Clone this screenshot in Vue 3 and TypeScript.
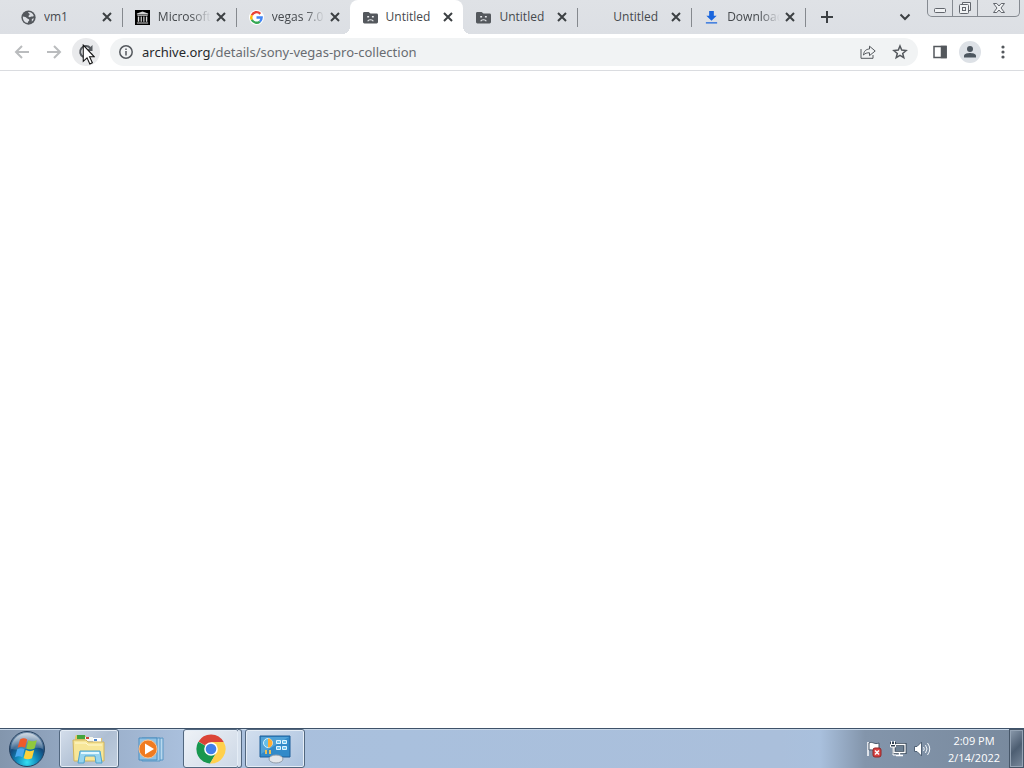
<script setup lang="ts">
import { ref } from 'vue'

type IconName = 'globe' | 'archive' | 'google' | 'sad' | 'none' | 'download'

interface Tab {
  id: number
  title: string
  icon: IconName
}

const tabs: Tab[] = [
  { id: 1, title: 'vm1', icon: 'globe' },
  { id: 2, title: 'Microsoft', icon: 'archive' },
  { id: 3, title: 'vegas 7.0', icon: 'google' },
  { id: 4, title: 'Untitled', icon: 'sad' },
  { id: 5, title: 'Untitled', icon: 'sad' },
  { id: 6, title: 'Untitled', icon: 'none' },
  { id: 7, title: 'Downloads', icon: 'download' },
]
const active = ref(4)

function hasDivider(index: number): boolean {
  return tabs[index].id !== active.value && tabs[index + 1]?.id !== active.value
}
</script>

<template>
  <div class="desktop">
    <header class="strip">
      <div class="tabs" role="tablist">
        <div
          v-for="(tab, i) in tabs"
          :key="tab.id"
          class="tab"
          :class="{ active: tab.id === active, divided: hasDivider(i) }"
        >
          <button class="pick" role="tab" :aria-selected="tab.id === active" @click="active = tab.id">
            <svg class="favicon" viewBox="0 0 16 16" aria-hidden="true">
              <g v-if="tab.icon === 'globe'">
                <circle cx="8" cy="8" r="7.6" fill="#54585d" />
                <path d="M2 6.8c2.2.4 3 .2 4 1.6 1 1.2 2.600.6 2.800 2.200.2 1.200-1.600 1-1.600 3.300C4.200 13.600 2 11 2 8z" fill="#dee1e6" />
                <path d="M7.600 2.200c2.600-.3 5.200 1.300 6 3.800-.8 1.500-2.200.3-3.200 1.300-1.200.8-2.600.2-2.400-.9.200-1 1.400-.9 1.200-2-.2-.9-1.600-.7-1.600-2.200z" fill="#dee1e6" />
                <path d="M11.500 9.500l2.200-.6c-.3 1.600-1 2.600-2.200 3.500z" fill="#dee1e6" />
              </g>
              <g v-else-if="tab.icon === 'archive'">
                <path d="M0 0h16v16H0z" fill="#000" />
                <path d="M8 1.500l6 2.300v1H2v-1zM2.500 5.500h11v1h-11zM3 7h1.500v5.500H3zM6 7h1.300v5.500H6zM8.800 7h1.300v5.500H8.800zM11.600 7h1.500v5.500h-1.500zM2 13.200h12v1.300H2z" fill="#d5d5d5" />
              </g>
              <g v-else-if="tab.icon === 'google'">
                <circle cx="8" cy="8" r="8" fill="#fff" />
                <g fill="none" stroke-width="2.500">
                  <path d="M12.100 4.100A5.600 5.600 0 0 0 3 5.500" stroke="#ea4335" />
                  <path d="M3 5.500a5.600 5.600 0 0 0 0 5" stroke="#fbbc05" />
                  <path d="M3 10.500a5.600 5.600 0 0 0 8.600 1.800" stroke="#34a853" />
                  <path d="M11.600 12.300A5.600 5.600 0 0 0 13.500 8H8" stroke="#4285f4" />
                </g>
              </g>
              <g v-else-if="tab.icon === 'sad'">
                <path d="M0 3.500Q0 2 1.500 2H6l2 1.800h6.500Q16 3.800 16 5.200v7.600q0 1.500-1.500 1.500h-13Q0 14.300 0 12.800z" fill="#54585d" />
                <path d="M4.500 6.500h2v1.600h-2zM9.500 6.500h2v1.600h-2z" fill="#e8eaed" />
                <path d="M5 12c.8-2.200 5.200-2.200 6 0" fill="none" stroke="#e8eaed" stroke-width="1.200" />
              </g>
              <g v-else-if="tab.icon === 'download'" fill="#1a66dd">
                <path d="M5.500 1h5v5H13.500L8 11.500 2.500 6h3zM2 13h12v1.500H2z" />
              </g>
            </svg>
            <span class="title" :class="{ long: tab.title.length > 8 }">{{ tab.title }}</span>
          </button>
          <button class="close" aria-label="Close tab">
            <svg viewBox="0 0 10 10" aria-hidden="true"><path d="M1 1l8 8M9 1L1 9" /></svg>
          </button>
        </div>
      </div>
      <button class="plus" aria-label="New tab">
        <svg viewBox="0 0 14 14" aria-hidden="true"><path d="M7 1v12M1 7h12" /></svg>
      </button>
      <button class="chevron" aria-label="Search tabs">
        <svg viewBox="0 0 12 8" aria-hidden="true"><path d="M1.500 1.500L6 6l4.500-4.500" /></svg>
      </button>
      <div class="window-controls">
        <button class="min" aria-label="Minimize">
          <svg width="14" height="16" viewBox="0 0 14 16"><rect x="1.500" y="8.500" width="11" height="4" rx="1" /></svg>
        </button>
        <button class="max" aria-label="Restore">
          <svg width="14" height="16" viewBox="0 0 14 16">
            <path d="M4.500 4V2.500h8v8H11" /><rect x="1.500" y="4.500" width="9" height="9" rx="1" /><rect x="4.500" y="7.500" width="3" height="3" />
          </svg>
        </button>
        <button class="shut" aria-label="Close window">
          <svg width="14" height="16" viewBox="0 0 14 16"><path d="M1.500 3.500h3.300L7 6l2.200-2.500h3.300L9 8l3.500 4.500H9.200L7 10l-2.200 2.500H1.500L5 8z" /></svg>
        </button>
      </div>
    </header>

    <nav class="toolbar">
      <button class="tool faded" aria-label="Back">
        <svg viewBox="0 0 16 16" aria-hidden="true"><path d="M15 8H2M8 2L2 8l6 6" /></svg>
      </button>
      <button class="tool faded" aria-label="Forward">
        <svg viewBox="0 0 16 16" aria-hidden="true"><path d="M1 8h13M8 2l6 6-6 6" /></svg>
      </button>
      <button class="tool reload" aria-label="Reload">
        <svg viewBox="0 0 16 16" aria-hidden="true">
          <path d="M13.500 9.500A5.800 5.800 0 1 1 12.300 4" /><path d="M14.500 1v6h-6z" fill="#54585d" stroke="none" />
        </svg>
        <svg class="cursor" viewBox="0 0 12 20" aria-hidden="true">
          <path d="M1 1v15.500l3.600-3.300 2.700 5.800 2.400-1.100L7 12.200h4.500z" />
        </svg>
      </button>
      <div class="address">
        <button class="mini" aria-label="Site information">
          <svg width="14" height="14" viewBox="0 0 14 14">
            <circle cx="7" cy="7" r="6.200" /><path d="M7 6v4.500M7 3.400V5" />
          </svg>
        </button>
        <div class="url" role="textbox" aria-label="Address" tabindex="0">archive.org<span>/details/sony-vegas-pro-collection</span></div>
        <button class="mini share" aria-label="Share">
          <svg width="16" height="16" viewBox="0 0 16 16">
            <path d="M1 5v9.300h12V11" /><path d="M3.500 11c.4-4 2.500-5.800 6-6V2.200L15.200 7l-5.700 4.600V8.800c-2.500-.1-4.300.4-6 2.200z" />
          </svg>
        </button>
        <button class="mini" aria-label="Bookmark this tab">
          <svg width="16" height="16" viewBox="0 0 16 16"><path d="M8 2l1.700 4.100 4.400.4-3.400 2.900 1.100 4.300L8 11.400l-3.800 2.300 1.100-4.300-3.400-2.900 4.400-.4z" /></svg>
        </button>
      </div>
      <div class="extras">
        <button class="mini" aria-label="Side panel">
          <svg width="16" height="16" viewBox="0 0 16 16"><path d="M2 2.500h12v11H2z" /><path d="M9.500 2.500H14v11H9.500z" fill="#54585d" /></svg>
        </button>
        <button class="profile" aria-label="Profile">
          <svg width="14" height="14" viewBox="0 0 14 14"><circle cx="7" cy="4" r="3" /><path d="M1 12.500v-1.700C1 8.600 5 8 7 8s6 .6 6 2.800v1.700z" /></svg>
        </button>
        <button class="mini menu" aria-label="Menu">
          <svg width="4" height="14" viewBox="0 0 4 14"><circle cx="2" cy="2" r="1.600" /><circle cx="2" cy="7" r="1.600" /><circle cx="2" cy="12" r="1.600" /></svg>
        </button>
      </div>
    </nav>

    <main class="page"></main>

    <footer class="taskbar">
      <button class="start" aria-label="Start">
        <svg width="38" height="38" viewBox="0 0 38 38">
          <defs>
            <radialGradient id="orb" cx="50%" cy="88%" r="85%">
              <stop offset="0" stop-color="#35e0f2" /><stop offset=".35" stop-color="#128abb" />
              <stop offset=".65" stop-color="#14497b" /><stop offset="1" stop-color="#7d97b2" />
            </radialGradient>
            <linearGradient id="gloss" x1="0" y1="0" x2="0" y2="1">
              <stop offset="0" stop-color="#fff" stop-opacity=".65" /><stop offset="1" stop-color="#fff" stop-opacity=".15" />
            </linearGradient>
          </defs>
          <circle cx="19" cy="19" r="17.500" fill="url(#orb)" stroke="#26415f" />
          <path d="M3 19a16 16 0 0 1 32 0c-8-4-23 3-32 0z" fill="url(#gloss)" />
          <path d="M12 9.500c2.800-1.600 5-1.400 7.200 0l-2.200 8.300c-2.200-1.400-4.700-1.400-7.400 0z" fill="#ef5a2a" />
          <path d="M20.400 10.200c2.800 1.600 5 1.500 8.400 0l-2.200 8.200c-3 1.500-5.500 1.400-8.400 0z" fill="#90c83e" />
          <path d="M9.200 19.200c2.600-1.400 5-1.400 7.400 0l-2.200 8.100c-2.400-1.400-4.800-1.400-7.400 0z" fill="#4aa9ef" />
          <path d="M17.800 20c2.800 1.500 5.400 1.500 8.400 0L24 28.200c-3 1.400-5.600 1.400-8.400 0z" fill="#fdd13a" />
        </svg>
      </button>
      <button class="task open" aria-label="Windows Explorer">
        <svg width="36" height="34" viewBox="0 0 36 34">
          <path d="M4 5l1-2h9l2 3h15v3H4z" fill="#e5c86c" />
          <path d="M6 3h8v4H6z" fill="#44a43d" /><path d="M14 5h8v4h-8z" fill="#f6f8ef" /><path d="M15 5h3v2h-3z" fill="#cf4636" /><path d="M22 6h8v4h-8z" fill="#fff" /><path d="M23 7h3v2h-3z" fill="#4e88d2" />
          <path d="M2 8h13l2 2h16v19H3z" fill="#f7e698" stroke="#d0b45c" />
          <path d="M4 11h11l2 2h14" fill="none" stroke="#fff9d0" />
          <path d="M7 31l2-12h20l2 12h-6l-1-7H14l-1 7z" fill="#96d4ef" stroke="#4ca3ce" />
          <path d="M10 21h18" stroke="#e1f8ff" stroke-width="2" />
        </svg>
      </button>
      <button class="task" aria-label="Windows Media Player">
        <svg width="32" height="28" viewBox="0 0 32 28">
          <path d="M10 4l18-1v22H10z" fill="#b9d8ee" stroke="#5796c5" />
          <path d="M7 3h18v23H7z" fill="#a9cfea" stroke="#5796c5" />
          <path d="M4 3h18v22H4z" fill="#90c2e4" stroke="#4a8dbf" />
          <circle cx="13" cy="14" r="9" fill="#f07b20" stroke="#fbc18c" /><path d="M10 8.500l9 5.500-9 5.500z" fill="#fff" />
        </svg>
      </button>
      <button class="task open chrome" aria-label="Google Chrome">
        <svg width="30" height="30" viewBox="0 0 30 30">
          <path d="M15 15L2.500 7.500A14.500 14.500 0 0 1 27.700 8z" fill="#db4437" />
          <path d="M2.300 7.800A14.500 14.500 0 0 0 14 29.500l6.500-11L15 15z" fill="#18974f" />
          <path d="M27.700 8A14.500 14.500 0 0 1 14 29.500l7-12L15 8z" fill="#ffd04c" />
          <circle cx="15" cy="15" r="6.800" fill="#fff" /><circle cx="15" cy="15" r="5.300" fill="#427fea" />
        </svg>
      </button>
      <button class="task open panel" aria-label="Control Panel">
        <svg width="34" height="30" viewBox="0 0 34 30">
          <path d="M2 2h30v21H2z" fill="#328ac9" stroke="#1f5f99" /><path d="M3 3h28L3 20z" fill="#64b1df" opacity=".6" />
          <circle cx="10" cy="9" r="4.500" fill="#65bfe9" stroke="#d5f1ff" /><path d="M10 9V4.500A4.500 4.500 0 0 1 10 13.500z" fill="#ffad32" />
          <g fill="#6fc3ec" stroke="#dff4ff"><path d="M18.500 6.500h4v3h-4zM24.500 6.500h4v3h-4zM18.500 12.500h4v3h-4zM24.500 12.500h4v3h-4z" /></g>
          <path d="M8 16v4M12 16v4" stroke="#edbf54" stroke-width="2" />
          <ellipse cx="18" cy="25" rx="7" ry="4" fill="#e3e6ea" stroke="#929daa" />
        </svg>
      </button>
      <div class="tray">
        <button aria-label="Action Center">
          <svg width="18" height="18" viewBox="0 0 18 18">
            <path d="M3 2v14" stroke="#fff" stroke-width="1.500" /><path d="M4 3c4-2 5 2 10 0v7c-5 2-6-1-10 0z" fill="#fff" stroke="#49586a" />
            <rect x="8" y="8" width="8" height="9" rx="2" fill="#d94343" stroke="#912626" /><path d="M10 10.500l4 4M14 10.500l-4 4" stroke="#fff" stroke-width="1.500" />
          </svg>
        </button>
        <button aria-label="Network">
          <svg width="18" height="18" viewBox="0 0 18 18">
            <path d="M5 4.500h11v8H5z" fill="#6c7f92" stroke="#2f3f50" stroke-width="3" /><path d="M5 4.500h11v8H5zM10.500 13v2M7 15.500h7" fill="none" stroke="#fff" stroke-width="1.300" />
            <path d="M1 2h6v5H1z" fill="#2f3f50" /><path d="M2.500 1v3M5.500 1v3M1.500 4.500h5V7h-5zM4 7v8h3" fill="none" stroke="#fff" />
          </svg>
        </button>
        <button aria-label="Volume">
          <svg width="18" height="18" viewBox="0 0 18 18">
            <path d="M1.500 6.500H4L8.500 2v14L4 11.500H1.500z" fill="#fff" stroke="#506175" />
            <path d="M10.500 7q1.500 2 0 4M12.500 5q3 4 0 8M14.500 3q4.500 6 0 12" fill="none" stroke="#f2f6fa" />
          </svg>
        </button>
      </div>
      <button class="clock"><span>2:09 PM</span><span>2/14/2022</span></button>
      <button class="show" aria-label="Show desktop"></button>
    </footer>
  </div>
</template>

<style>
body {
  margin: 0;
}
</style>

<style scoped>
.desktop {
  display: flex;
  flex-direction: column;
  min-height: 100vh;
  background: #fff;
  font-family: "Open Sans", "Noto Sans", sans-serif;
  font-size: 12px;
  color: #45494d;
}
button {
  display: flex;
  align-items: center;
  justify-content: center;
  flex: none;
  padding: 0;
  border: 0;
  background: none;
  color: inherit;
  font: inherit;
}
svg {
  display: block;
  flex: none;
}
.strip {
  display: flex;
  align-items: stretch;
  height: 34px;
  padding: 0 4px 0 8px;
  background: linear-gradient(#dfe2e6, #dcdfe4);
}
.tabs {
  display: flex;
  flex: 0 1 797px;
  min-width: 0;
}
.tab {
  display: flex;
  flex: 1;
  align-items: center;
  min-width: 0;
  position: relative;
  padding: 0 9px 0 13px;
}
.tab.divided::after {
  content: "";
  position: absolute;
  right: -1px;
  top: 8px;
  height: 19px;
  width: 1px;
  background: #85898e;
}
.tab.active {
  background: #fff;
  border-radius: 8px 8px 0 0;
}
.tab.active::before,
.tab.active::after {
  content: "";
  position: absolute;
  bottom: 0;
  width: 8px;
  height: 8px;
}
.tab.active::before {
  right: 100%;
  background: radial-gradient(circle at 0 0, transparent 8px, #fff 8px);
}
.tab.active::after {
  left: 100%;
  background: radial-gradient(circle at 100% 0, transparent 8px, #fff 8px);
}
.pick {
  flex: 1;
  justify-content: flex-start;
  gap: 8px;
  min-width: 0;
  height: 34px;
}
.favicon {
  width: 15px;
  height: 15px;
}
.title {
  flex: 1;
  min-width: 0;
  overflow: hidden;
  white-space: nowrap;
  text-align: left;
  line-height: 18px;
}
.title.long {
  margin-right: 4px;
  mask-image: linear-gradient(to right, #000 calc(100% - 20px), transparent);
}
.close {
  width: 12px;
  height: 16px;
}
.close svg {
  width: 10px;
  height: 10px;
}
.close path,
.plus path,
.chevron path {
  fill: none;
  stroke: #3c4043;
  stroke-width: 2;
}
.plus {
  width: 44px;
}
.plus svg {
  width: 14px;
}
.chevron {
  width: 44px;
  margin-left: auto;
}
.chevron svg {
  width: 12px;
}
.window-controls {
  display: flex;
  height: 16px;
  border: 1px solid #858a91;
  border-top: 0;
  border-radius: 0 0 5px 5px;
  overflow: hidden;
}
.window-controls button {
  width: 25px;
  border-right: 1px solid #858a91;
}
.window-controls .shut {
  width: 41px;
  border-right: 0;
}
.window-controls svg {
  fill: #f0f2f4;
  stroke: #62666d;
}
.toolbar {
  display: flex;
  align-items: center;
  height: 36px;
  padding: 0 16px 0 8px;
  border-bottom: 1px solid #dadce0;
}
.tool {
  width: 28px;
  height: 28px;
  margin-right: 4px;
  border-radius: 50%;
}
.tool svg {
  width: 16px;
  height: 16px;
  fill: none;
  stroke: #54585d;
  stroke-width: 2;
}
.faded svg {
  stroke: #babcbe;
}
.reload {
  position: relative;
  background: #e9eaec;
}
.tool .cursor {
  position: absolute;
  left: 10px;
  top: 6px;
  width: 13px;
  height: 21px;
  fill: #fff;
  stroke: #111;
  stroke-width: 1;
}
.address {
  display: flex;
  flex: 1;
  align-items: center;
  gap: 16px;
  min-width: 0;
  height: 28px;
  margin-left: 6px;
  padding: 0 10px 0 9px;
  border-radius: 14px;
  background: #f1f3f4;
}
.mini svg {
  fill: none;
  stroke: #54585d;
  stroke-width: 1.5;
}
.share svg {
  stroke-width: 1;
}
.url {
  flex: 1;
  min-width: 0;
  margin-left: -7px;
  overflow: hidden;
  white-space: nowrap;
  font-family: "Noto Sans", "Open Sans", sans-serif;
  font-size: 13px;
  line-height: 20px;
  color: #26292c;
}
.url span {
  color: #686c71;
}
.extras {
  display: flex;
  align-items: center;
  gap: 14px;
  padding-left: 14px;
}
.profile {
  width: 22px;
  height: 22px;
  margin-left: -3px;
  border-radius: 50%;
  background: #dde1e6;
}
.profile svg {
  fill: #4d565f;
}
.menu {
  width: 10px;
  margin-left: 3px;
}
.menu svg {
  fill: #54585d;
  stroke: none;
}
.page {
  flex: 1;
}
.taskbar {
  display: flex;
  align-items: stretch;
  height: 39px;
  border-top: 1px solid #3e5269;
  box-shadow: inset 0 1px #c8d8e9;
  background: linear-gradient(to right, #8396ad 0, #92a6c0 60px, #a9bfdc 180px, #a9c0dd 400px, #aabfdb 780px, #a9c0dd 820px, #8395ab 865px, #78899d 100%);
}
.start {
  width: 54px;
}
.task {
  width: 60px;
  margin-right: 2px;
}
.start + .task {
  margin-left: 5px;
}
.open {
  border: 1px solid #52677f;
  border-radius: 3px;
  box-shadow: inset 0 0 0 1px #e5edf6;
  background: linear-gradient(135deg, #d4deeb, #afbfd3 55%, #c0cede);
}
.chrome {
  position: relative;
  width: 56px;
  margin-right: 6px;
  background: linear-gradient(135deg, #eef2f7, #cdd8e6);
}
.chrome::after {
  content: "";
  position: absolute;
  left: 100%;
  top: -1px;
  bottom: -1px;
  width: 3px;
  border: 1px solid #52677f;
  border-left: 0;
  border-radius: 0 3px 3px 0;
  background: #d7e1ed;
}
.panel {
  background: linear-gradient(135deg, #d2dfef, #acc2de);
}
.tray {
  display: flex;
  align-items: center;
  gap: 6px;
  margin-left: auto;
}
.clock {
  flex-direction: column;
  width: 70px;
  margin-left: 8px;
  color: #fff;
  font-size: 11px;
  line-height: 17px;
}
.show {
  width: 15px;
  border: 1px solid #465668;
  box-shadow: inset 0 0 0 1px #95a4b5;
  background: linear-gradient(135deg, #8c9bad, #4d5e72 50%, #79899c);
}
</style>
